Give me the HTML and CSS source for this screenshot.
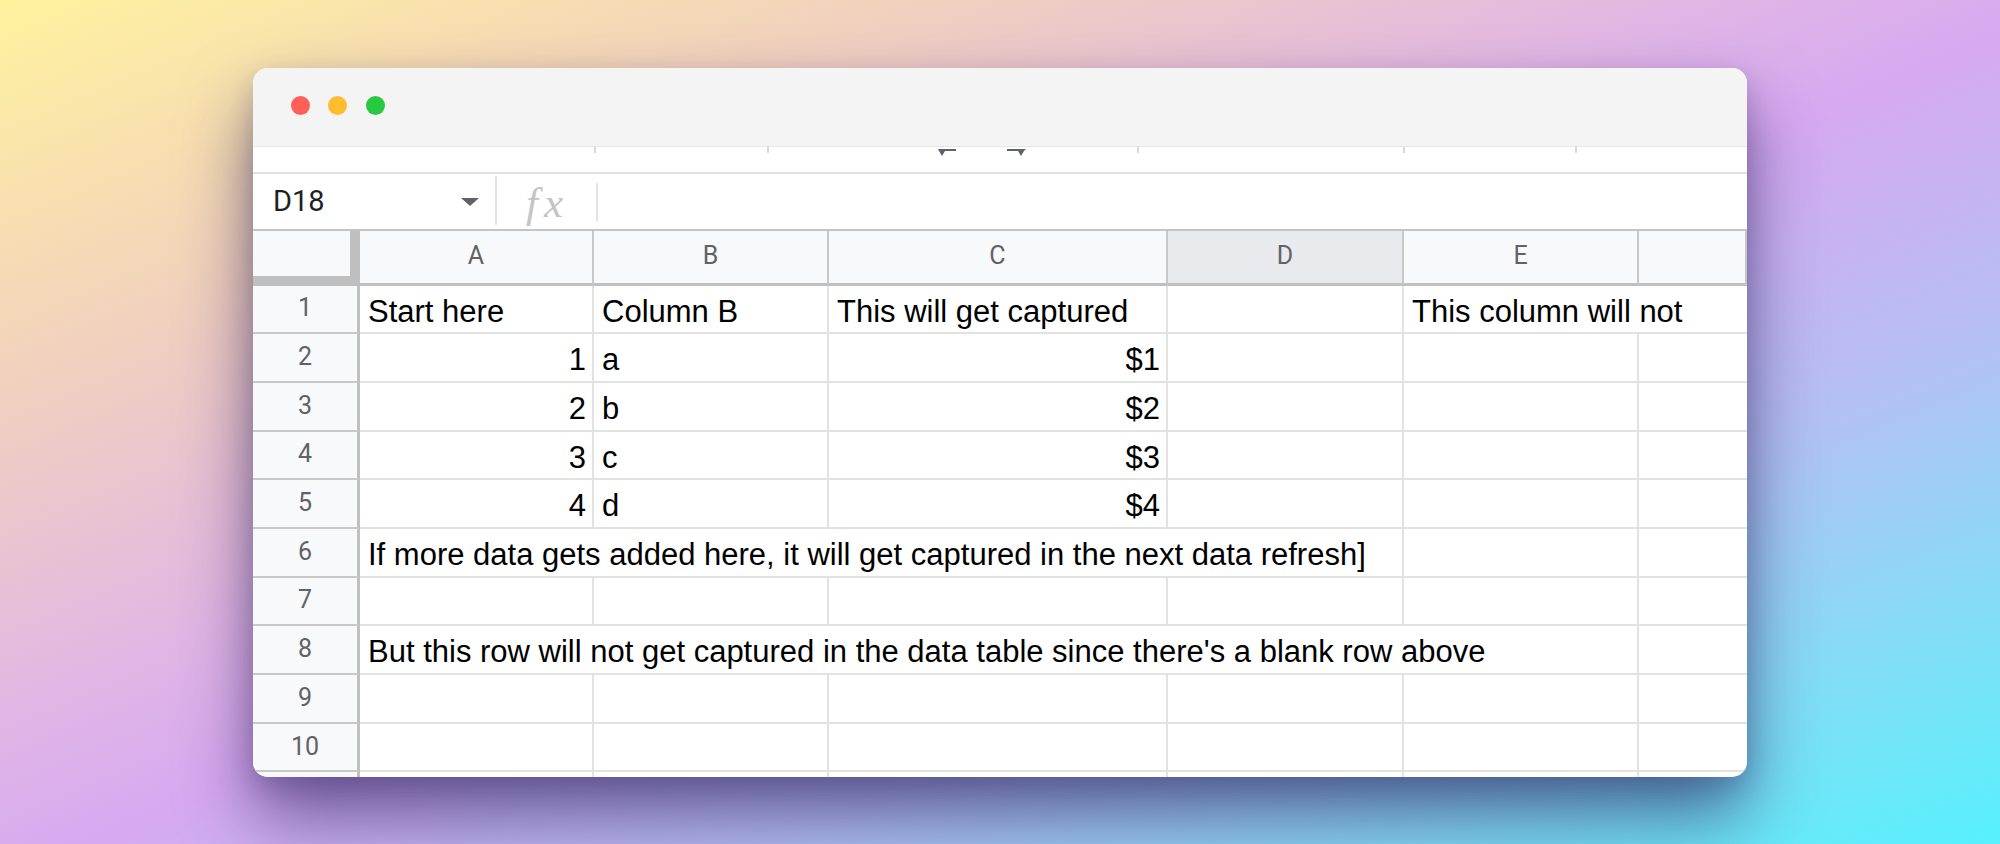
FILE: index.html
```html
<!DOCTYPE html>
<html lang="en">
<head>
<meta charset="utf-8">
<title>Sheet</title>
<link rel="stylesheet" href="styles.css">
</head>
<body>
<div class="window">
  <div class="titlebar">
    <span class="dot red"></span>
    <span class="dot yellow"></span>
    <span class="dot green"></span>
  </div>
  <div class="toolstrip">
    <span class="tick t1"></span>
    <span class="tick t2"></span>
    <svg class="arrow a1" width="18" height="8" viewBox="0 0 18 8"><path d="M0 0h18v2H7L4 7 1 2z" fill="#5f6368"/></svg>
    <svg class="arrow a2" width="19" height="8" viewBox="0 0 19 8"><path d="M19 0H0v2h11l3 5 3-5z" fill="#5f6368"/></svg>
    <span class="tick t3"></span>
    <span class="tick t4"></span>
    <span class="tick t5"></span>
  </div>
  <div class="formulabar">
    <div class="namebox"><span class="name">D18</span><span class="caret"></span></div>
    <div class="sep"></div>
    <div class="fx">fx</div>
    <div class="sep short"></div>
  </div>
  <div class="sheet">
    <div class="corner"></div>
    <div class="ch">A</div><div class="ch">B</div><div class="ch">C</div><div class="ch sel">D</div><div class="ch">E</div><div class="ch"></div>

    <div class="rh">1</div>
    <div class="c">Start here</div><div class="c">Column B</div><div class="c">This will get captured</div><div class="c"></div><div class="c span2 last">This column will not</div>

    <div class="rh">2</div>
    <div class="c r">1</div><div class="c">a</div><div class="c r">$1</div><div class="c"></div><div class="c"></div><div class="c last"></div>

    <div class="rh">3</div>
    <div class="c r">2</div><div class="c">b</div><div class="c r">$2</div><div class="c"></div><div class="c"></div><div class="c last"></div>

    <div class="rh">4</div>
    <div class="c r">3</div><div class="c">c</div><div class="c r">$3</div><div class="c"></div><div class="c"></div><div class="c last"></div>

    <div class="rh">5</div>
    <div class="c r">4</div><div class="c">d</div><div class="c r">$4</div><div class="c"></div><div class="c"></div><div class="c last"></div>

    <div class="rh">6</div>
    <div class="c span4">If more data gets added here, it will get captured in the next data refresh]</div><div class="c"></div><div class="c last"></div>

    <div class="rh">7</div>
    <div class="c"></div><div class="c"></div><div class="c"></div><div class="c"></div><div class="c"></div><div class="c last"></div>

    <div class="rh">8</div>
    <div class="c span5">But this row will not get captured in the data table since there's a blank row above</div><div class="c last"></div>

    <div class="rh">9</div>
    <div class="c"></div><div class="c"></div><div class="c"></div><div class="c"></div><div class="c"></div><div class="c last"></div>

    <div class="rh">10</div>
    <div class="c"></div><div class="c"></div><div class="c"></div><div class="c"></div><div class="c"></div><div class="c last"></div>

    <div class="rh"></div>
    <div class="c"></div><div class="c"></div><div class="c"></div><div class="c"></div><div class="c"></div><div class="c last"></div>
  </div>
</div>
</body>
</html>
```

FILE: styles.css
```css
* { box-sizing: border-box; }

html, body {
  margin: 0;
  padding: 0;
}

body {
  width: 2000px;
  height: 844px;
  overflow: hidden;
  display: flex;
  align-items: center;
  justify-content: center;
  font-family: "Liberation Sans", Arial, sans-serif;
  background:
    linear-gradient(to bottom right, #fff29e 0%, #f1cfc0 24%, #e2b7e4 42%, #d7a9f1 52%, #b4c0f3 70%, #86dcf6 85%, #57f1fc 100%);
}

.window {
  width: 1494px;
  height: 709px;
  border-radius: 15px;
  overflow: hidden;
  background: #ffffff;
  display: flex;
  flex-direction: column;
  box-shadow: 0 40px 70px rgba(40, 32, 90, 0.6), 0 10px 24px rgba(40, 32, 90, 0.18);
}

/* ---------- title bar ---------- */
.titlebar {
  height: 78px;
  flex: none;
  background: #f4f4f4;
  display: flex;
  align-items: center;
  gap: 18.5px;
  padding-left: 37.5px;
  padding-bottom: 2px;
}

.dot {
  width: 19px;
  height: 19px;
  border-radius: 50%;
  display: block;
}
.dot.red { background: #fe5f57; }
.dot.yellow { background: #febc2e; }
.dot.green { background: #28c840; }

/* ---------- cut-off toolbar strip ---------- */
.toolstrip {
  height: 28px;
  flex: none;
  background: #ffffff;
  border-top: 1px solid #e6e6e6;
  border-bottom: 2px solid #dfe1e4;
  display: flex;
  align-items: flex-start;
}

.tick {
  display: block;
  width: 2px;
  height: 6px;
  background: #d6d8db;
}
.t1 { margin-left: 341px; }
.t2 { margin-left: 171px; }
.a1 { margin-left: 169px; margin-top: 2px; }
.a2 { margin-left: 51px; margin-top: 2px; }
.t3 { margin-left: 111px; }
.t4 { margin-left: 264px; }
.t5 { margin-left: 170px; }

/* ---------- formula bar ---------- */
.formulabar {
  height: 57px;
  flex: none;
  border-bottom: 2px solid #c4c4c4;
  display: flex;
  align-items: flex-start;
}

.namebox {
  width: 242px;
  height: 55px;
  display: flex;
  align-items: center;
  padding-left: 20px;
  padding-right: 16px;
}

.name {
  font-family: Roboto, "Liberation Sans", sans-serif;
  font-size: 29px;
  color: #1f1f1f;
  flex: 1;
}

.caret {
  width: 0;
  height: 0;
  border-left: 9px solid transparent;
  border-right: 9px solid transparent;
  border-top: 8px solid #5f6368;
  margin-top: 2px;
}

.sep {
  width: 2px;
  height: 49px;
  margin-top: 2px;
  background: #e3e3e3;
}
.sep.short {
  height: 38px;
  margin-top: 9px;
}

.fx {
  width: 99px;
  height: 55px;
  display: flex;
  align-items: center;
  padding-left: 29px;
  padding-top: 2px;
  font-family: "Liberation Serif", "Times New Roman", serif;
  font-style: italic;
  font-size: 43px;
  letter-spacing: 6px;
  color: #c4c4c4;
}

/* ---------- sheet grid ---------- */
.sheet {
  flex: 1;
  display: grid;
  grid-template-columns: 107px 234px 235px 339px 236px 235px 108px;
  grid-template-rows: 55px;
  grid-auto-rows: 48.7px;
  overflow: hidden;
}

.corner {
  background: #f8f9fa;
  border-right: 10px solid #bfbfbf;
  border-bottom: 10px solid #bfbfbf;
}

.ch {
  background: #f8f9fa;
  border-right: 2px solid #c7c7c7;
  border-bottom: 3px solid #c0c0c0;
  display: flex;
  align-items: center;
  justify-content: center;
  font-family: Roboto, "Liberation Sans", sans-serif;
  font-size: 25px;
  color: #5f6368;
  padding-bottom: 2px;
}
.ch:last-child { border-right: none; }
.ch.sel { background: #e8eaed; }

.rh {
  background: #f8f9fa;
  border-right: 3px solid #c0c0c0;
  border-bottom: 2px solid #c9c9c9;
  display: flex;
  align-items: center;
  justify-content: center;
  font-family: Roboto, "Liberation Sans", sans-serif;
  font-size: 25px;
  color: #5f6368;
  padding-bottom: 2px;
}

.c {
  border-right: 2px solid #e2e2e2;
  border-bottom: 2px solid #e2e2e2;
  padding: 3px 6px 0 8px;
  line-height: 46px;
  font-size: 31px;
  color: #000000;
  white-space: nowrap;
}
.c.r { text-align: right; }
.c.last { border-right: none; }
.span2 { grid-column: span 2; }
.span4 { grid-column: span 4; }
.span5 { grid-column: span 5; }
```
